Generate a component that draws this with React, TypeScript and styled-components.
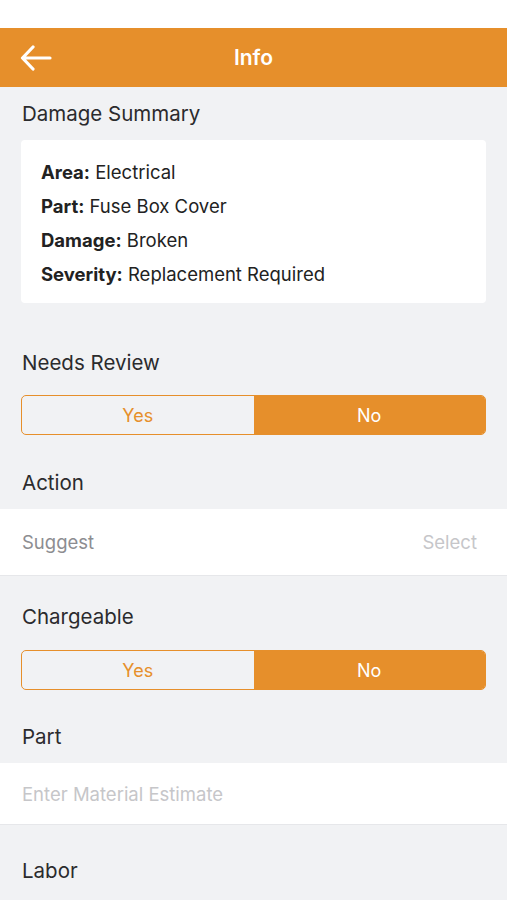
import React from 'react';
import styled, { createGlobalStyle } from 'styled-components';

const ORANGE = '#e68f2b';

const GlobalStyle = createGlobalStyle`
  html, body {
    margin: 0;
    padding: 0;
    background: #f1f2f4;
  }
  body {
    font-family: Inter, "Noto Sans", sans-serif;
    color: #2b2b2d;
  }
`;

const Screen = styled.div`
  width: 507px;
  min-height: 900px;
  background: #f1f2f4;
`;

const StatusGap = styled.div`
  height: 28px;
  background: #ffffff;
`;

const NavBar = styled.header`
  position: relative;
  height: 59px;
  background: ${ORANGE};
  display: flex;
  align-items: center;
  justify-content: center;
`;

const BackButton = styled.button`
  position: absolute;
  left: 18px;
  top: 15px;
  width: 36px;
  height: 30px;
  padding: 0;
  border: 0;
  background: transparent;
  display: flex;
  align-items: center;
  justify-content: center;
`;

const NavTitle = styled.h1`
  margin: 0;
  font-size: 21px;
  font-weight: 600;
  color: #ffffff;
`;

const SectionLabel = styled.div<{ $top: number; $bottom: number }>`
  padding: ${(p) => p.$top}px 22px ${(p) => p.$bottom}px;
  font-size: 20.5px;
  line-height: 24px;
  color: #2b2b2d;
`;

const SummaryCard = styled.div`
  margin: 0 21px;
  background: #ffffff;
  border-radius: 4px;
  padding: 21px 20px 18px;
  display: flex;
  flex-direction: column;
  gap: 12px;
`;

const SummaryLine = styled.div`
  font-size: 18.5px;
  line-height: 22px;
  color: #222;
  b {
    font-weight: 700;
  }
`;

const Segmented = styled.div`
  margin: 0 21px;
  height: 40px;
  display: grid;
  grid-template-columns: 1fr 1fr;
  border: 1.5px solid ${ORANGE};
  border-radius: 5px;
  overflow: hidden;
  box-sizing: border-box;
`;

const Segment = styled.div<{ $active?: boolean }>`
  display: flex;
  align-items: center;
  justify-content: center;
  font-size: 18px;
  background: ${(p) => (p.$active ? ORANGE : 'transparent')};
  color: ${(p) => (p.$active ? '#ffffff' : ORANGE)};
`;

const FieldRow = styled.div<{ $height: number }>`
  height: ${(p) => p.$height}px;
  background: #ffffff;
  border-bottom: 1px solid #e6e7ea;
  display: flex;
  align-items: center;
  justify-content: space-between;
  padding: 0 30px 0 22px;
  font-size: 18.5px;
`;

const FieldName = styled.span`
  color: #8d8d91;
`;

const FieldHint = styled.span`
  color: #c6c6c9;
`;

function ArrowLeft() {
  return (
    <svg width="32" height="26" viewBox="0 0 32 26" fill="none">
      <path
        d="M30 13H3M13 2L2.5 13L13 24"
        stroke="#ffffff"
        strokeWidth="3.2"
        strokeLinecap="round"
        strokeLinejoin="round"
      />
    </svg>
  );
}

function Toggle({ value }: { value: 'yes' | 'no' }) {
  return (
    <Segmented>
      <Segment $active={value === 'yes'}>Yes</Segment>
      <Segment $active={value === 'no'}>No</Segment>
    </Segmented>
  );
}

export default function App() {
  return (
    <Screen>
      <GlobalStyle />
      <StatusGap />
      <NavBar>
        <BackButton aria-label="Back">
          <ArrowLeft />
        </BackButton>
        <NavTitle>Info</NavTitle>
      </NavBar>

      <SectionLabel $top={15} $bottom={14}>Damage Summary</SectionLabel>
      <SummaryCard>
        <SummaryLine><b>Area:</b> Electrical</SummaryLine>
        <SummaryLine><b>Part:</b> Fuse Box Cover</SummaryLine>
        <SummaryLine><b>Damage:</b> Broken</SummaryLine>
        <SummaryLine><b>Severity:</b> Replacement Required</SummaryLine>
      </SummaryCard>

      <SectionLabel $top={48} $bottom={20}>Needs Review</SectionLabel>
      <Toggle value="no" />

      <SectionLabel $top={36} $bottom={14}>Action</SectionLabel>
      <FieldRow $height={66}>
        <FieldName>Suggest</FieldName>
        <FieldHint>Select</FieldHint>
      </FieldRow>

      <SectionLabel $top={29} $bottom={21}>Chargeable</SectionLabel>
      <Toggle value="no" />

      <SectionLabel $top={35} $bottom={14}>Part</SectionLabel>
      <FieldRow $height={61}>
        <FieldHint>Enter Material Estimate</FieldHint>
      </FieldRow>

      <SectionLabel $top={34} $bottom={14}>Labor</SectionLabel>
    </Screen>
  );
}
